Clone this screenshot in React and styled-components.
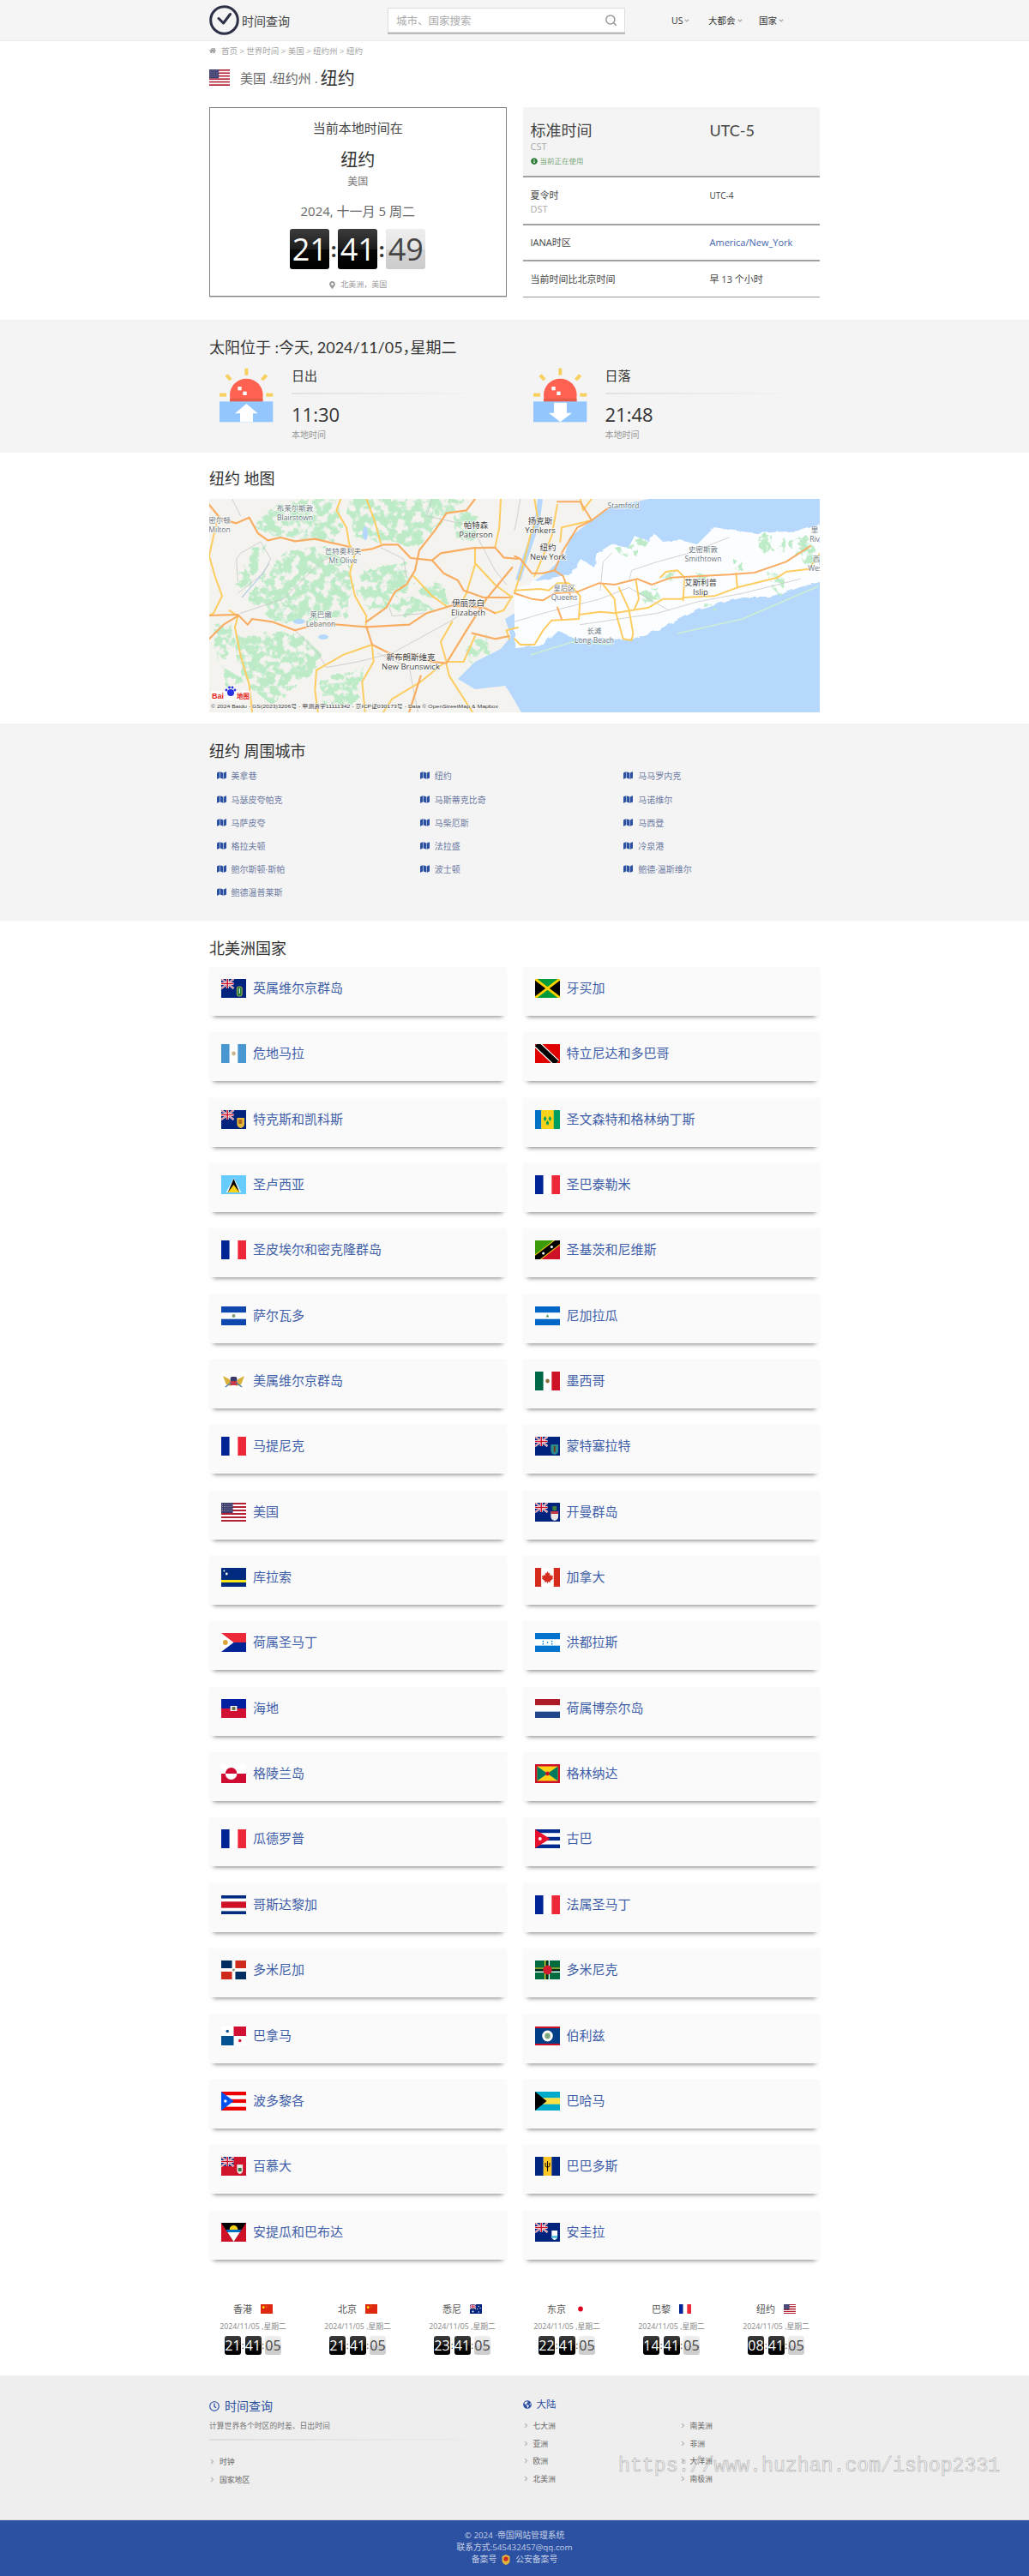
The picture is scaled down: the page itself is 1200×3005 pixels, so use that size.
import React from "react";
import styled, { createGlobalStyle } from "styled-components";
import { Search } from "lucide-react";
import {
  FaAngleDown,
  FaAngleRight,
  FaGlobeAmericas,
  FaHome,
  FaInfoCircle,
  FaMap,
  FaMapMarkerAlt,
  FaRegClock,
} from "react-icons/fa";

const BLUE = "#2c51a3";

const GlobalStyle = createGlobalStyle`
  html, body {
    margin: 0;
    padding: 0;
    background: #fff;
  }
  body {
    font-family: "Open Sans", "Noto Sans CJK SC", sans-serif;
    color: #333;
  }
  * {
    box-sizing: border-box;
  }
`;

const Page = styled.div`
  width: 1200px;
  height: 3005px;
  overflow: hidden;
`;

const Container = styled.div`
  width: 712px;
  margin: 0 auto;
`;

/* header */
const TopBar = styled.header`
  height: 48px;
  background: #f5f5f5;
  border-bottom: 1px solid #ececec;
`;

const TopBarInner = styled(Container)`
  display: flex;
  align-items: center;
  height: 47px;
`;

const Brand = styled.div`
  display: flex;
  align-items: center;
  width: 208px;
  font-size: 14px;
  color: #444;
  gap: 3px;
`;

const SearchBox = styled.div`
  display: flex;
  align-items: center;
  justify-content: space-between;
  width: 277px;
  height: 29px;
  padding: 0 8px 0 9px;
  background: #fff;
  border: 1px solid #ddd;
  box-shadow: 0 2px 0 #bbb;
  font-size: 12.5px;
  color: #aaa;
`;

const NavList = styled.nav`
  display: flex;
  margin-left: 54px;
  font-size: 10.5px;
  color: #333;
`;

const NavItem = styled.span`
  display: flex;
  align-items: center;
  gap: 1px;
  width: ${(p) => p.$w}px;
  svg {
    color: #aaa;
    font-size: 8px;
  }
`;

/* breadcrumb and title */
const Breadcrumb = styled.div`
  display: flex;
  align-items: center;
  gap: 4px;
  height: 22px;
  font-size: 9.5px;
  color: #a5a5a5;
  svg {
    font-size: 8px;
    color: #999;
    margin-right: 2px;
  }
`;

const PlaceTitle = styled.div`
  display: flex;
  align-items: center;
  height: 23px;
  margin: 9px 0 23px;
  font-size: 15px;
  color: #666;
`;

const PlaceCity = styled.span`
  font-size: 20px;
  color: #333;
  margin-left: 3px;
`;

const PlaceRegion = styled.span`
  margin-left: 12px;
`;

/* time panel */
const TwoCols = styled.div`
  display: grid;
  grid-template-columns: 1fr 1fr;
  column-gap: 19px;
`;

const TimeCard = styled.div`
  display: flex;
  flex-direction: column;
  align-items: center;
  height: 221px;
  padding-top: 12px;
  border: 1px solid #808080;
  box-shadow: 0 1px 0 #ccc;
`;

const CardLead = styled.div`
  font-size: 15px;
  line-height: 22px;
  color: #444;
`;

const CardCity = styled.div`
  font-size: 20px;
  line-height: 28px;
  margin-top: 13px;
  color: #333;
`;

const CardCountry = styled.div`
  font-size: 12px;
  line-height: 18px;
  margin-top: 2px;
  color: #777;
`;

const CardDate = styled.div`
  font-size: 15px;
  line-height: 22px;
  margin-top: 14px;
  color: #666;
`;

const CardPlace = styled.div`
  display: flex;
  align-items: center;
  gap: 5px;
  font-size: 9px;
  line-height: 14px;
  margin-top: 11px;
  color: #999;
`;

const Clock = styled.div`
  display: flex;
  align-items: center;
  margin-top: ${(p) => (p.$big ? 10 : 4)}px;
  font-family: "Open Sans", sans-serif;
`;

const Digit = styled.span`
  display: block;
  text-align: center;
  width: ${(p) => (p.$big ? 46 : 19)}px;
  height: ${(p) => (p.$big ? 47 : 22)}px;
  line-height: ${(p) => (p.$big ? 47 : 22)}px;
  font-size: ${(p) => (p.$big ? 36 : 16)}px;
  border-radius: 3px;
  color: ${(p) => (p.$light ? "#444" : "#fff")};
  background: ${(p) =>
    p.$light
      ? "linear-gradient(#eeeeee, #e4e4e4 50%, #d4d4d4 50%, #cccccc)"
      : "linear-gradient(#3c3c3c, #1c1c1c 50%, #080808 50%, #000000)"};
`;

const Colon = styled.span`
  display: block;
  text-align: center;
  width: ${(p) => (p.$big ? 10 : 4.5)}px;
  font-size: ${(p) => (p.$big ? 24 : 11)}px;
  font-weight: ${(p) => (p.$big ? 700 : 400)};
  line-height: ${(p) => (p.$big ? 47 : 22)}px;
  color: #333;
`;

const ZoneTable = styled.div`
  display: flex;
  flex-direction: column;
`;

const ZoneRow = styled.div`
  display: grid;
  grid-template-columns: 209px 1fr;
  padding-left: 9px;
  height: ${(p) => p.$h}px;
  align-items: ${(p) => (p.$center ? "center" : "start")};
  padding-top: ${(p) => p.$top || 0}px;
  background: ${(p) => (p.$shade ? "#f4f4f4" : "transparent")};
  border-bottom: ${(p) => (p.$thin ? "1px solid #999" : "2px solid #a2a2a2")};
`;

const ZoneName = styled.div`
  font-size: ${(p) => (p.$large ? 18 : 11)}px;
  line-height: ${(p) => (p.$large ? 24 : 16)}px;
  color: #444;
`;

const ZoneNote = styled.div`
  font-size: 11px;
  line-height: ${(p) => (p.$large ? 14 : 16)}px;
  color: #aaa;
`;

const ZoneStatus = styled.div`
  display: flex;
  align-items: center;
  gap: 3px;
  margin-top: 4px;
  font-size: 8.5px;
  line-height: 12px;
  color: #7aa87a;
  svg {
    color: #2f7d3a;
    font-size: 8px;
  }
`;

const ZoneValue = styled.div`
  font-family: ${(p) => (p.$large ? "Lato, sans-serif" : "inherit")};
  font-size: ${(p) => (p.$large ? 18 : p.$small ? 10 : 11)}px;
  line-height: ${(p) => (p.$large ? 24 : 16)}px;
  color: ${(p) => (p.$link ? "#4566b0" : "#444")};
`;

/* sections */
const SunSection = styled.section`
  margin-top: 26px;
  height: 155px;
  padding-top: 20px;
  background: #f4f4f4;
`;

const SectionTitle = styled.h2`
  margin: 0;
  font-family: Lato, "Noto Sans CJK SC", sans-serif;
  font-size: 18px;
  line-height: 24px;
  font-weight: 400;
  font-feature-settings: "halt";
  color: #333;
`;

const SunRow = styled.div`
  display: flex;
  padding-left: 11px;
  gap: 20px;
  margin-top: 11px;
`;

const SunIconWrap = styled.svg`
  display: block;
  width: 65px;
  height: 64px;
  margin-top: 1px;
  flex: none;
`;

const SunInfo = styled.div`
  width: 228px;
`;

const SunLabel = styled.div`
  font-size: 15px;
  line-height: 20px;
  color: #333;
`;

const SunRule = styled.div`
  height: 2px;
  margin: 10px 0 8px;
  background: linear-gradient(90deg, #e2e2e2, #f4f4f4);
`;

const SunTime = styled.div`
  font-size: 22px;
  line-height: 30px;
  color: #333;
`;

const SunCaption = styled.div`
  font-size: 10px;
  line-height: 14px;
  margin-top: 2px;
  color: #999;
`;

const MapSection = styled.section`
  height: 316px;
  padding-top: 18px;
`;

const MapFrame = styled.svg`
  display: block;
  width: 712px;
  height: 249px;
  margin-top: 12px;
`;

const CitySection = styled.section`
  height: 230px;
  padding-top: 20px;
  background: #f4f4f4;
`;

const CityGrid = styled.div`
  display: grid;
  grid-template-columns: repeat(3, 1fr);
  grid-auto-rows: 27.2px;
  margin-top: 3.4px;
`;

const CityLink = styled.a`
  display: flex;
  align-items: center;
  gap: 6px;
  padding-left: 8.5px;
  font-size: 10px;
  color: #6d7ba3;
  svg {
    color: ${BLUE};
    font-size: 11px;
  }
`;

const CountrySection = styled.section`
  padding-top: 20px;
`;

const CountryGrid = styled.div`
  display: grid;
  grid-template-columns: 1fr 1fr;
  column-gap: 19px;
  row-gap: 19.35px;
  margin-top: 10px;
`;

const CountryCard = styled.a`
  display: flex;
  align-items: flex-start;
  gap: 8px;
  height: 57px;
  padding: 14px 0 0 14px;
  background: #fafafa;
  font-size: 15px;
  line-height: 20px;
  color: #3f5ea8;
  box-shadow: 0 6px 5px -5px rgba(0, 0, 0, 0.5), 0 0 1px rgba(0, 0, 0, 0.06);
`;

const FlagSvg = styled.svg`
  display: block;
  flex: none;
  width: ${(p) => p.$w}px;
  height: ${(p) => p.$h}px;
`;

const WorldClocks = styled.div`
  display: grid;
  grid-template-columns: repeat(6, 122px);
  justify-content: center;
  margin: 50px -10px 0;
  height: 85px;
`;

const WorldClock = styled.div`
  display: flex;
  flex-direction: column;
  align-items: center;
`;

const WorldCity = styled.div`
  display: flex;
  align-items: center;
  gap: 10px;
  font-size: 11px;
  line-height: 16px;
  color: #555;
`;

const WorldDate = styled.div`
  margin-top: 5px;
  font-size: 8.8px;
  line-height: 14px;
  color: #888;
`;

/* footer */
const FooterTop = styled.footer`
  position: relative;
  height: 168px;
  padding-top: 24px;
  background: #eeeeee;
`;

const FooterBrand = styled.div`
  display: flex;
  align-items: center;
  gap: 6px;
  margin-top: 2px;
  font-size: 14px;
  line-height: 20px;
  color: ${BLUE};
  svg {
    font-size: 12px;
  }
`;

const FooterNote = styled.p`
  margin: 6px 0 0;
  font-size: 8.8px;
  line-height: 14px;
  color: #777;
`;

const FooterRule = styled.div`
  height: 2px;
  margin: 8px 5px 15px 0;
  background: linear-gradient(90deg, #dedede, #eeeeee);
`;

const FooterHead = styled.div`
  display: flex;
  align-items: center;
  gap: 6px;
  font-size: 11.5px;
  line-height: 20px;
  color: ${BLUE};
  svg {
    font-size: 10px;
  }
`;

const ContinentGrid = styled.div`
  display: grid;
  grid-template-columns: 183px 1fr;
  grid-auto-rows: 20.7px;
  margin-top: 4.6px;
`;

const FooterLink = styled.a`
  display: flex;
  align-items: center;
  gap: 5px;
  height: 20.7px;
  font-size: 8.8px;
  color: #666;
  svg {
    font-size: 9px;
    color: #bbb;
    width: 7px;
  }
`;

const Watermark = styled.div`
  position: absolute;
  left: 721px;
  top: 92px;
  font-family: "Liberation Mono", monospace;
  font-size: 23.2px;
  line-height: 28px;
  white-space: nowrap;
  color: transparent;
  -webkit-text-stroke: 0.5px #a4a4a4;
`;

const FooterBottom = styled.div`
  height: 66px;
  padding-top: 11px;
  background: ${BLUE};
  border-top: 1px solid #dcdcdc;
  font-size: 9.8px;
  line-height: 14px;
  text-align: center;
  color: rgba(255, 255, 255, 0.72);
`;

const FooterLine = styled.div`
  display: flex;
  align-items: center;
  justify-content: center;
  gap: 6px;
`;

const Badge = styled.svg`
  width: 10px;
  height: 12px;
`;

/* flags */
const Ensign = ({ bg = "#00247d", children }) => (
  <>
    <rect width="30" height="22" fill={bg} />
    <rect width="15" height="11" fill="#00247d" />
    <path d="M0 0L15 11M15 0L0 11" stroke="#fff" strokeWidth="2.2" />
    <path d="M0 0L15 11M15 0L0 11" stroke="#cf142b" strokeWidth="0.8" />
    <path d="M7.5 0V11M0 5.5H15" stroke="#fff" strokeWidth="3" />
    <path d="M7.5 0V11M0 5.5H15" stroke="#cf142b" strokeWidth="1.6" />
    {children}
  </>
);

const Bars = ({ colors, vertical }) => {
  const size = (vertical ? 30 : 22) / colors.length;
  return colors.map((c, i) =>
    vertical ? (
      <rect key={i} x={i * size} width={size + 0.2} height="22" fill={c} />
    ) : (
      <rect key={i} y={i * size} width="30" height={size + 0.2} fill={c} />
    )
  );
};

const usFlag = (
  <>
    <Bars colors={["#b22234", "#fff", "#b22234", "#fff", "#b22234", "#fff", "#b22234", "#fff", "#b22234", "#fff", "#b22234"]} />
    <rect width="14" height="12" fill="#3c3b6e" />
    <path d="M1 2H13M1 4.5H13M1 7H13M1 9.5H13" stroke="#aab" strokeWidth="0.9" strokeDasharray="1 1.2" />
  </>
);

const frFlag = <Bars vertical colors={["#002395", "#fff", "#ed2939"]} />;

const FLAGS = {
  us: usFlag,
  fr: frFlag,
  vg: (
    <Ensign>
      <rect x="19" y="9" width="6" height="11" rx="2" fill="#1f7a3a" stroke="#e5c84a" strokeWidth="0.8" />
      <rect x="21.5" y="11" width="1" height="6" fill="#fff" />
    </Ensign>
  ),
  jm: (
    <>
      <rect width="30" height="22" fill="#009b3a" />
      <path d="M0 0L15 11L0 22ZM30 0L15 11L30 22Z" fill="#000" />
      <path d="M0 0L30 22M30 0L0 22" stroke="#fed100" strokeWidth="3" />
    </>
  ),
  gt: (
    <>
      <Bars vertical colors={["#4997d0", "#fff", "#4997d0"]} />
      <circle cx="15" cy="11" r="2.4" fill="#c9b78a" />
    </>
  ),
  tt: (
    <>
      <rect width="30" height="22" fill="#e00000" />
      <path d="M2 0L26 22" stroke="#fff" strokeWidth="9" />
      <path d="M2 0L26 22" stroke="#000" strokeWidth="6.5" />
    </>
  ),
  tc: (
    <Ensign>
      <path d="M19 9H28V16Q28 20 23.5 21Q19 20 19 16Z" fill="#e5b83a" />
      <rect x="21" y="11" width="4" height="5" fill="#b5651d" />
    </Ensign>
  ),
  vc: (
    <>
      <Bars vertical colors={["#0072c6", "#fcd116", "#fcd116", "#009e60"]} />
      <path d="M12 7l2 3-2 3-2-3ZM18 7l2 3-2 3-2-3ZM15 12l2 3-2 3-2-3Z" fill="#009e60" />
    </>
  ),
  lc: (
    <>
      <rect width="30" height="22" fill="#66ccff" />
      <path d="M15 3L24 20H6Z" fill="#fff" />
      <path d="M15 4L22 20H8Z" fill="#000" />
      <path d="M15 11L22 20H8Z" fill="#fcd116" />
    </>
  ),
  kn: (
    <>
      <path d="M0 0H30L0 22Z" fill="#3a9a08" />
      <path d="M30 0V22H0Z" fill="#ce1126" />
      <path d="M0 22L30 0" stroke="#fcd116" strokeWidth="9" />
      <path d="M0 22L30 0" stroke="#000" strokeWidth="7" />
      <circle cx="10" cy="15" r="1.6" fill="#fff" />
      <circle cx="20" cy="7.5" r="1.6" fill="#fff" />
    </>
  ),
  sv: (
    <>
      <Bars colors={["#0f47af", "#fff", "#0f47af"]} />
      <circle cx="15" cy="11" r="2" fill="#7d9a6d" />
    </>
  ),
  ni: (
    <>
      <Bars colors={["#0067c6", "#fff", "#0067c6"]} />
      <path d="M15 9l2 3.5h-4Z" fill="#5a9a5a" />
    </>
  ),
  vi: (
    <>
      <rect width="30" height="22" fill="#fff" />
      <path d="M2 5L10 9L12 17L6 15ZM28 5L20 9L18 17L24 15Z" fill="#d9b13b" />
      <rect x="11" y="6" width="8" height="10" rx="2" fill="#3c3b6e" />
      <rect x="11" y="11" width="8" height="5" fill="#c8394a" />
      <path d="M5 18L12 13M25 18L18 13" stroke="#4a79a8" strokeWidth="1.5" />
    </>
  ),
  mx: (
    <>
      <Bars vertical colors={["#006847", "#fff", "#ce1126"]} />
      <circle cx="15" cy="11" r="2.4" fill="#8c6d3f" />
    </>
  ),
  ms: (
    <Ensign>
      <path d="M19 9H28V16Q28 20 23.5 21Q19 20 19 16Z" fill="#2e8b8b" />
      <rect x="22.5" y="11" width="2" height="7" fill="#6b3f1f" />
    </Ensign>
  ),
  ky: (
    <Ensign>
      <path d="M19 10H28V16Q28 20 23.5 21Q19 20 19 16Z" fill="#e8e8e8" />
      <rect x="19" y="10" width="9" height="3" fill="#c8394a" />
      <path d="M21 4h5v5h-5Z" fill="#3d7f3d" />
    </Ensign>
  ),
  cw: (
    <>
      <rect width="30" height="22" fill="#002b7f" />
      <rect y="14" width="30" height="3" fill="#f9e814" />
      <circle cx="3.5" cy="3.5" r="1" fill="#fff" />
      <circle cx="6.5" cy="7" r="1.4" fill="#fff" />
    </>
  ),
  ca: (
    <>
      <Bars vertical colors={["#d52b1e", "#fff", "#fff", "#d52b1e"]} />
      <path d="M15 4l1.4 2.6 1.6-.8-.6 3.4 2-1.4.6 1.6 2-.2-1 2.6.8.6-3.6 2.8.4 1.6-3.2-.6V18h-.8v-1.8l-3.2.6.4-1.6-3.6-2.8.8-.6-1-2.6 2 .2.6-1.6 2 1.4-.6-3.4 1.6.8Z" fill="#d52b1e" />
    </>
  ),
  sx: (
    <>
      <rect width="30" height="11" fill="#ed2939" />
      <rect y="11" width="30" height="11" fill="#002395" />
      <path d="M0 0L15 11L0 22Z" fill="#fff" />
      <circle cx="5" cy="11" r="3" fill="#e0a53a" />
    </>
  ),
  hn: (
    <>
      <Bars colors={["#0073cf", "#fff", "#0073cf"]} />
      <path d="M9 9h1.4v1.4H9ZM19.6 9H21v1.4h-1.4ZM14.3 10.3h1.4v1.4h-1.4ZM9 12h1.4v1.4H9ZM19.6 12H21v1.4h-1.4Z" fill="#0073cf" />
    </>
  ),
  ht: (
    <>
      <Bars colors={["#00209f", "#d21034"]} />
      <rect x="11" y="8" width="8" height="6" fill="#fff" />
      <rect x="13" y="9" width="4" height="4" fill="#6b6b4a" />
    </>
  ),
  bq: <Bars colors={["#ae1c28", "#fff", "#21468b"]} />,
  gl: (
    <>
      <Bars colors={["#fff", "#d00c33"]} />
      <path d="M5 11A7 7 0 0 1 19 11Z" fill="#d00c33" />
      <path d="M5 11A7 7 0 0 0 19 11Z" fill="#fff" />
    </>
  ),
  gd: (
    <>
      <rect width="30" height="22" fill="#ce1126" />
      <rect x="2.5" y="2.5" width="25" height="17" fill="#fcd116" />
      <path d="M2.5 2.5L15 11L2.5 19.5ZM27.5 2.5L15 11L27.5 19.5Z" fill="#007a5e" />
      <circle cx="15" cy="11" r="2.4" fill="#ce1126" />
    </>
  ),
  cu: (
    <>
      <Bars colors={["#002a8f", "#fff", "#002a8f", "#fff", "#002a8f"]} />
      <path d="M0 0L18 11L0 22Z" fill="#e8112d" />
      <circle cx="6" cy="11" r="2" fill="#fff" />
    </>
  ),
  cr: (
    <>
      <rect width="30" height="22" fill="#fff" />
      <rect width="30" height="3.6" fill="#002b7f" />
      <rect y="18.4" width="30" height="3.6" fill="#002b7f" />
      <rect y="7.3" width="30" height="7.4" fill="#ce1126" />
    </>
  ),
  do: (
    <>
      <rect width="30" height="22" fill="#fff" />
      <rect width="13" height="9" fill="#002d62" />
      <rect x="17" width="13" height="9" fill="#ce2b1c" />
      <rect y="13" width="13" height="9" fill="#ce2b1c" />
      <rect x="17" y="13" width="13" height="9" fill="#002d62" />
      <circle cx="15" cy="11" r="1.5" fill="#889a7a" />
    </>
  ),
  dm: (
    <>
      <rect width="30" height="22" fill="#006b3f" />
      <path d="M12 0V22M0 9H30" stroke="#fcd116" strokeWidth="1.2" />
      <path d="M14.5 0V22M0 11.2H30" stroke="#000" strokeWidth="1.2" />
      <path d="M17 0V22M0 13.4H30" stroke="#fff" strokeWidth="1.2" />
      <circle cx="15" cy="11" r="5.4" fill="#d41c30" />
    </>
  ),
  pa: (
    <>
      <rect width="30" height="22" fill="#fff" />
      <rect x="15" width="15" height="11" fill="#d21034" />
      <rect y="11" width="15" height="11" fill="#005293" />
      <circle cx="7.5" cy="5.5" r="1.8" fill="#005293" />
      <circle cx="22.5" cy="16.5" r="1.8" fill="#d21034" />
    </>
  ),
  bz: (
    <>
      <rect width="30" height="22" fill="#003f87" />
      <rect width="30" height="2" fill="#ce1126" />
      <rect y="20" width="30" height="2" fill="#ce1126" />
      <circle cx="15" cy="11" r="6.5" fill="#fff" />
      <circle cx="15" cy="11" r="3.4" fill="#7ea97e" />
    </>
  ),
  pr: (
    <>
      <Bars colors={["#ed0000", "#fff", "#ed0000", "#fff", "#ed0000"]} />
      <path d="M0 0L15 11L0 22Z" fill="#0050f0" />
      <circle cx="5" cy="11" r="1.8" fill="#fff" />
    </>
  ),
  bs: (
    <>
      <Bars colors={["#00abc9", "#fae042", "#00abc9"]} />
      <path d="M0 0L14 11L0 22Z" fill="#000" />
    </>
  ),
  bm: (
    <Ensign bg="#cf142b">
      <path d="M19 9H26V16Q26 19 22.5 20Q19 19 19 16Z" fill="#e8e8e8" />
      <rect x="20.5" y="13" width="4" height="4" fill="#2e7d3a" />
    </Ensign>
  ),
  bb: (
    <>
      <Bars vertical colors={["#00267f", "#ffc726", "#00267f"]} />
      <path d="M15 5V17M12.5 7V10.5Q12.5 12 15 12Q17.5 12 17.5 10.5V7" stroke="#000" strokeWidth="1" fill="none" />
    </>
  ),
  ag: (
    <>
      <rect width="30" height="22" fill="#ce1126" />
      <path d="M0 0H30L15 22Z" fill="#000" />
      <path d="M7.5 11H22.5L15 22Z" fill="#fff" />
      <path d="M5.5 8H24.5L22.5 11H7.5Z" fill="#0072c6" />
      <path d="M10 8A5 5 0 0 1 20 8Z" fill="#fcd116" />
    </>
  ),
  ai: (
    <Ensign>
      <path d="M20 9H27V16Q27 19 23.5 20Q20 19 20 16Z" fill="#fff" />
      <rect x="20" y="15" width="7" height="3" fill="#5cc4e0" />
    </Ensign>
  ),
  cn: (
    <>
      <rect width="30" height="22" fill="#de2910" />
      <circle cx="7" cy="7" r="3" fill="#ffde00" />
      <circle cx="13.5" cy="3.5" r="0.9" fill="#ffde00" />
      <circle cx="15.5" cy="7" r="0.9" fill="#ffde00" />
    </>
  ),
  au: (
    <Ensign>
      <circle cx="22" cy="5" r="1.3" fill="#fff" />
      <circle cx="26" cy="9" r="1.3" fill="#fff" />
      <circle cx="19" cy="11" r="1.3" fill="#fff" />
      <circle cx="22" cy="18" r="1.5" fill="#fff" />
      <circle cx="7.5" cy="17" r="2.2" fill="#fff" />
    </Ensign>
  ),
  jp: (
    <>
      <rect width="30" height="22" fill="#fff" />
      <circle cx="15" cy="11" r="6" fill="#e0001f" />
    </>
  ),
};

const Flag = ({ code, w = 29, h = 22 }) => (
  <FlagSvg $w={w} $h={h} viewBox="0 0 30 22" preserveAspectRatio="none">
    {FLAGS[code]}
  </FlagSvg>
);

/* map data, coordinates read from the reference at 3x */
const WEST_ORANGE = [
  "0,20 40,70 95,85 140,65 170,120 205,145 250,135 300,148 370,140 420,152 480,165 520,182 570,175 610,160 660,160 705,207 780,215 810,190 920,172 1000,170 1030,205 1080,210",
  "780,215 820,260 870,285 890,320 960,345 1050,345",
  "0,408 100,405 135,440 150,420 220,430 300,460 390,435 550,448 700,440 760,400 850,373 960,380 1000,400",
  "550,448 570,510 640,545 660,558 710,540 780,570 830,575 900,460 970,350 1060,240",
  "550,430 620,380 650,325 690,300 720,250 735,180 790,110 830,50 900,40 930,0",
  "920,470 1000,490 1050,480",
  "0,490 50,440 100,410",
  "740,620 700,745",
];

const WEST_YELLOW = [
  "460,0 445,40 480,100 490,160 510,190 492,260 510,340 550,410 548,440",
  "550,0 580,80 600,155",
  "30,70 15,130 0,200 20,270 45,340 15,400 0,408",
  "70,390 100,410 90,450 110,550 140,650 150,745",
  "570,510 470,545 375,600 370,670 380,745",
  "570,515 575,570 535,640 545,745",
  "715,270 780,340 830,375",
  "930,170 930,230 900,330 880,370",
  "930,225 1000,300 1060,345",
  "850,430 810,500 830,570 890,570 930,480",
  "830,580 840,620 920,745",
  "820,575 740,640 640,700 610,745",
  "1020,0 1015,100 1000,170",
  "1060,340 1030,390 1000,400",
  "1080,450 1040,460 1050,490",
];

const WEST_GRAY = [
  "100,290 95,210 110,190 180,150 215,210 190,260 100,330",
  "110,400 260,350 390,220 500,170",
  "600,170 680,210 690,270",
  "300,460 380,540 410,590 520,570 640,540 840,430 970,350",
  "630,380 640,410 760,400",
  "780,0 760,60 900,90",
  "80,0 110,60",
  "920,100 1000,250 1040,300",
  "590,540 700,590 730,745",
];

const EAST_ORANGE = [
  "0,330 60,350 100,355 140,330 220,325 295,295 350,300 430,280 480,300 550,275 750,265 840,258 950,220 1035,165",
  "0,200 20,210 60,260 100,260 140,250 170,270 200,350",
  "150,380 165,420",
  "330,30 270,75 230,10 150,10",
  "270,75 220,100 170,180 140,250",
];

const EAST_YELLOW = [
  "70,0 80,60 55,130 30,230 0,330",
  "230,0 240,40 270,0",
  "160,150 165,100 230,85 270,75",
  "150,20 130,130 70,270",
  "0,320 90,315 120,320 150,295 190,295 230,340 225,420 130,425 100,460 70,510 20,510 0,490",
  "225,405 300,395 350,400 470,380 520,350 585,350 590,345 700,340 780,310 920,275 950,255 1030,245 1070,190",
  "310,300 350,350 355,400 380,490 410,495 415,470 400,385 365,310",
  "425,285 435,350 420,385",
  "510,275 530,255 570,250 595,275 590,355",
  "775,260 780,310",
];

const EAST_GRAY = [
  "0,430 100,400 300,350 400,310 540,390",
  "400,290 410,250 500,220 610,190 750,135",
  "230,440 300,430 500,400 640,360 800,330 1000,280",
  "300,320 310,220 340,190",
  "20,0 10,60 0,110",
];

const GREEN_WEST = [
  "160,80 240,20 330,0 440,0 470,100 430,150 250,130 170,110",
  "480,0 900,0 830,50 740,170 600,150 500,130",
  "130,350 260,190 400,160 490,230 500,300 480,410 330,430 230,430",
  "530,250 700,220 700,310 620,380 560,390 520,340",
  "630,370 710,340 780,380 680,410",
  "100,470 320,470 390,540 360,610 220,720 130,650 90,550",
  "390,640 540,590 520,710 400,730",
  "50,590 120,630 60,660",
  "710,290 820,300 840,370 760,360",
  "10,440 80,430 90,530 30,570",
  "900,530 970,470 990,570 920,600",
  "860,40 940,60 930,150 860,140",
  "200,160 130,320 90,300 160,170",
];

const GREEN_EAST = [
  "850,125 900,125 900,170 860,180",
  "920,130 950,140 945,190 920,175",
  "880,250 950,270 930,340 900,310",
  "1000,180 1050,170 1060,220 1010,230",
  "350,170 420,160 430,200 370,195",
  "420,130 470,150 460,165 430,160",
  "520,255 570,255 555,285 520,285",
  "670,370 700,370 700,388 670,388",
  "770,215 800,215 795,250 775,250",
  "960,150 1040,130 1050,170 980,200",
  "640,260 680,270 670,300 640,295",
  "440,330 500,310 510,350 450,370",
];

const MAP_LABELS = [
  { x: 100, y: 23, zh: "布莱尔斯敦", en: "Blairstown" },
  { x: 12, y: 37, zh: "密尔顿", en: "Milton" },
  { x: 156, y: 73, zh: "芒特奥利夫", en: "Mt Olive" },
  { x: 311, y: 43, zh: "帕特森", en: "Paterson", strong: true },
  { x: 302, y: 134, zh: "伊丽莎白", en: "Elizabeth", strong: true },
  { x: 130, y: 147, zh: "莱巴嫩", en: "Lebanon" },
  { x: 235, y: 197, zh: "新布朗斯维克", en: "New Brunswick", strong: true },
  { x: 386, y: 38, zh: "扬克斯", en: "Yonkers", strong: true },
  { x: 395, y: 69, zh: "纽约", en: "New York", strong: true },
  { x: 414, y: 116, zh: "皇后区", en: "Queens" },
  { x: 576, y: 71, zh: "史密斯敦", en: "Smithtown" },
  { x: 573, y: 110, zh: "艾斯利普", en: "Islip", strong: true },
  { x: 449, y: 166, zh: "长滩", en: "Long Beach" },
  { x: 706, y: 48, zh: "里", en: "Riv" },
  { x: 708, y: 82, zh: "西", en: "West" },
];

const MapLabel = styled.text`
  font-family: "Open Sans", "Noto Sans CJK SC", sans-serif;
  font-size: ${(p) => (p.$strong ? 9.5 : 8.5)}px;
  fill: ${(p) => (p.$strong ? "#444" : "#6b7780")};
  text-anchor: middle;
  paint-order: stroke;
  stroke: rgba(255, 255, 255, 0.85);
  stroke-width: 1.5px;
`;

const MapNotice = styled.text`
  font-family: "Liberation Sans", "Noto Sans CJK SC", sans-serif;
  font-size: 5.6px;
  fill: #333;
  paint-order: stroke;
  stroke: rgba(255, 255, 255, 0.8);
  stroke-width: 1px;
`;

const Roads = ({ list, color, width }) =>
  list.map((points, i) => (
    <polyline
      key={i}
      points={points}
      fill="none"
      stroke={color}
      strokeWidth={width}
      strokeLinejoin="round"
      strokeLinecap="round"
    />
  ));

const RegionMap = () => (
  <MapFrame viewBox="0 0 712 249">
    <defs>
      <filter id="mottle" x="-5%" y="-5%" width="110%" height="110%" colorInterpolationFilters="sRGB">
        <feTurbulence type="fractalNoise" baseFrequency="0.035" numOctaves="4" seed="7" result="noise" />
        <feDisplacementMap in="SourceGraphic" in2="noise" scale="34" result="shape" />
        <feColorMatrix
          in="noise"
          type="matrix"
          values="0 0 0 0 0  0 0 0 0 0  0 0 0 0 0  7 0 0 0 -2.7"
          result="mask"
        />
        <feComposite in="shape" in2="mask" operator="in" />
      </filter>
      <filter id="coast" x="-2%" y="-2%" width="104%" height="104%" colorInterpolationFilters="sRGB">
        <feTurbulence type="fractalNoise" baseFrequency="0.09" numOctaves="2" seed="9" />
        <feDisplacementMap in="SourceGraphic" scale="5" />
      </filter>
    </defs>
    <rect width="712" height="249" fill="#f4f3ef" />
    <g transform="scale(0.3333)" fill="#bdebc8" filter="url(#mottle)">
      {GREEN_WEST.map((p) => (
        <polygon key={p} points={p} />
      ))}
    </g>
    <g fill="#b5d8fc">
      <ellipse cx="105" cy="143" rx="7" ry="3" />
      <ellipse cx="133" cy="161" rx="6" ry="3" />
      <ellipse cx="182" cy="40" rx="3" ry="8" />
    </g>
    <path d="M70 75L60 90L38 115" fill="none" stroke="#b5d0e6" strokeWidth="1.2" />
    <path
      d="M513,0 L712,0 L712,249 L364,249 L350,225 L345,218 L310,222 L290,210 L310,190 L340,175 L352,160 L345,140 L362,130 L358,110 L395,85 L415,65 L420,45 L446,25 L466,10 Z"
      fill="#b5d8fc"
    />
    <path d="M386,0 L382,30 L368,70 L360,95" fill="none" stroke="#b5d8fc" strokeWidth="6" />
    <polygon
      points="356,107 376,97 396,93 423,87 433,70 449,80 453,63 469,53 489,57 496,43 513,50 519,40 529,50 549,48 569,53 589,33 613,37 639,40 689,37 712,30 712,97 689,103 656,115 623,115 589,123 573,128 543,143 523,153 489,165 469,163 426,163 406,153 389,170 356,173"
      fill="#fcfdff"
      filter="url(#coast)"
    />
    <path d="M375,182 L423,167 L470,170 M546,157 L622,140 L710,102" fill="none" stroke="#cdeed3" strokeWidth="1.5" />
    <g transform="translate(356 0) scale(0.3333)" fill="#bdebc8" filter="url(#mottle)">
      {GREEN_EAST.map((p) => (
        <polygon key={p} points={p} />
      ))}
    </g>
    <g transform="translate(356 0) scale(0.3333)">
      <Roads list={EAST_GRAY} color="#c6c6c4" width={2.4} />
      <Roads list={EAST_YELLOW} color="#fdcd62" width={6} />
      <Roads list={EAST_ORANGE} color="#f9ad62" width={6} />
    </g>
    <g transform="scale(0.3333)">
      <Roads list={WEST_GRAY} color="#c6c6c4" width={2.4} />
      <Roads list={WEST_YELLOW} color="#fdcd62" width={6} />
      <Roads list={WEST_ORANGE} color="#f9ad62" width={6.5} />
    </g>
    {MAP_LABELS.map((l) => (
      <g key={l.en}>
        <MapLabel $strong={l.strong} x={l.x} y={l.y - 9}>
          {l.zh}
        </MapLabel>
        <MapLabel $strong={l.strong} x={l.x} y={l.y + 2}>
          {l.en}
        </MapLabel>
      </g>
    ))}
    <MapLabel x={483} y={11}>
      Stamford
    </MapLabel>
    <rect x="2" y="224" width="46" height="11" fill="#fff" opacity="0.8" />
    <text x="3" y="233" fontFamily="Liberation Sans" fontWeight="700" fontSize="9" fill="#e2231a">
      Bai
    </text>
    <g fill="#2932e1">
      <circle cx="25" cy="226" r="4" />
      <circle cx="20" cy="223" r="1.4" />
      <circle cx="23.5" cy="220" r="1.4" />
      <circle cx="27" cy="220" r="1.4" />
      <circle cx="30" cy="223" r="1.4" />
    </g>
    <text x="32" y="233" fontFamily="Noto Sans CJK SC" fontWeight="700" fontSize="7.5" fill="#e2231a">
      地图
    </text>
    <MapNotice x="2" y="244" textLength="335" lengthAdjust="spacingAndGlyphs">
      © 2024 Baidu - GS(2023)3206号 - 甲测资字11111342 - 京ICP证030173号 - Data © OpenStreetMap &amp; Mapbox
    </MapNotice>
  </MapFrame>
);

const SunIcon = ({ down }) => (
  <SunIconWrap viewBox="30 12 195 192">
    <g fill="#f7d060">
      <rect x="121" y="14" width="12" height="24" />
      <path d="M52 41l10-7 15 17-10 7zM202 41l-10-7-15 17 10 7z" />
      <rect x="33" y="101" width="24" height="12" />
      <rect x="196" y="101" width="24" height="12" />
    </g>
    <circle cx="127" cy="108" r="58" fill="#ff6250" />
    <rect x="69" y="120" width="116" height="14" fill="#e95b48" />
    <rect x="97" y="78" width="13" height="13" fill="#fff" />
    <rect x="115" y="95" width="13" height="13" fill="#fff" />
    <rect x="33" y="130" width="187" height="72" fill="#93c6fd" />
    {down ? (
      <path d="M105 134H150V170H168L127 202L87 170H105Z" fill="#fff" />
    ) : (
      <path d="M127 138L167 172H150V202H105V172H87Z" fill="#fff" />
    )}
  </SunIconWrap>
);

const BigClock = () => (
  <Clock $big>
    <Digit $big>21</Digit>
    <Colon $big>:</Colon>
    <Digit $big>41</Digit>
    <Colon $big>:</Colon>
    <Digit $big $light>
      49
    </Digit>
  </Clock>
);

const Logo = () => (
  <svg width="35" height="35" viewBox="0 0 35 35">
    <circle cx="17.5" cy="17.5" r="15.8" fill="none" stroke="#2d3047" strokeWidth="3" />
    <path d="M11 15.5L16.5 21L24.5 10.5" fill="none" stroke="#2d3047" strokeWidth="3" strokeLinecap="round" strokeLinejoin="round" />
  </svg>
);

const CITIES = [
  "美拿巷", "纽约", "马马罗内克",
  "马瑟皮夸帕克", "马斯蒂克比奇", "马诺维尔",
  "马萨皮夸", "马柴厄斯", "马西登",
  "格拉夫顿", "法拉盛", "冷泉港",
  "鲍尔斯顿·斯帕", "波士顿", "鲍德·温斯维尔",
  "鲍德温普莱斯",
];

const COUNTRIES = [
  ["英属维尔京群岛", "vg"], ["牙买加", "jm"],
  ["危地马拉", "gt"], ["特立尼达和多巴哥", "tt"],
  ["特克斯和凯科斯", "tc"], ["圣文森特和格林纳丁斯", "vc"],
  ["圣卢西亚", "lc"], ["圣巴泰勒米", "fr"],
  ["圣皮埃尔和密克隆群岛", "fr"], ["圣基茨和尼维斯", "kn"],
  ["萨尔瓦多", "sv"], ["尼加拉瓜", "ni"],
  ["美属维尔京群岛", "vi"], ["墨西哥", "mx"],
  ["马提尼克", "fr"], ["蒙特塞拉特", "ms"],
  ["美国", "us"], ["开曼群岛", "ky"],
  ["库拉索", "cw"], ["加拿大", "ca"],
  ["荷属圣马丁", "sx"], ["洪都拉斯", "hn"],
  ["海地", "ht"], ["荷属博奈尔岛", "bq"],
  ["格陵兰岛", "gl"], ["格林纳达", "gd"],
  ["瓜德罗普", "fr"], ["古巴", "cu"],
  ["哥斯达黎加", "cr"], ["法属圣马丁", "fr"],
  ["多米尼加", "do"], ["多米尼克", "dm"],
  ["巴拿马", "pa"], ["伯利兹", "bz"],
  ["波多黎各", "pr"], ["巴哈马", "bs"],
  ["百慕大", "bm"], ["巴巴多斯", "bb"],
  ["安提瓜和巴布达", "ag"], ["安圭拉", "ai"],
];

const WORLD = [
  ["香港", "cn", "21"],
  ["北京", "cn", "21"],
  ["悉尼", "au", "23"],
  ["东京", "jp", "22"],
  ["巴黎", "fr", "14"],
  ["纽约", "us", "08"],
];

const CONTINENTS = ["七大洲", "南美洲", "亚洲", "非洲", "欧洲", "大洋洲", "北美洲", "南极洲"];

const App = () => {
  return (
    <Page>
      <GlobalStyle />
      <TopBar>
        <TopBarInner>
          <Brand>
            <Logo />
            时间查询
          </Brand>
          <SearchBox>
            城市、国家搜索
            <Search size={15} color="#999" strokeWidth={2.4} />
          </SearchBox>
          <NavList>
            <NavItem $w={43}>US <FaAngleDown /></NavItem>
            <NavItem $w={59}>大都会 <FaAngleDown /></NavItem>
            <NavItem $w={50}>国家 <FaAngleDown /></NavItem>
          </NavList>
        </TopBarInner>
      </TopBar>

      <Container>
        <Breadcrumb>
          <FaHome /> 首页 &gt; 世界时间 &gt; 美国 &gt; 纽约州 &gt; 纽约
        </Breadcrumb>
        <PlaceTitle>
          <Flag code="us" w={24} h={19} />
          <PlaceRegion>美国 .纽约州 .</PlaceRegion>
          <PlaceCity>纽约</PlaceCity>
        </PlaceTitle>

        <TwoCols>
          <TimeCard>
            <CardLead>当前本地时间在</CardLead>
            <CardCity>纽约</CardCity>
            <CardCountry>美国</CardCountry>
            <CardDate>2024, 十一月 5 周二</CardDate>
            <BigClock />
            <CardPlace>
              <FaMapMarkerAlt /> 北美洲，美国
            </CardPlace>
          </TimeCard>
          <ZoneTable>
            <ZoneRow $h={82} $top={15} $shade>
              <div>
                <ZoneName $large>标准时间</ZoneName>
                <ZoneNote $large>CST</ZoneNote>
                <ZoneStatus>
                  <FaInfoCircle /> 当前正在使用
                </ZoneStatus>
              </div>
              <ZoneValue $large>UTC-5</ZoneValue>
            </ZoneRow>
            <ZoneRow $h={56} $top={13}>
              <div>
                <ZoneName>夏令时</ZoneName>
                <ZoneNote>DST</ZoneNote>
              </div>
              <ZoneValue $small>UTC-4</ZoneValue>
            </ZoneRow>
            <ZoneRow $h={42} $center>
              <ZoneName>IANA时区</ZoneName>
              <ZoneValue $link>America/New_York</ZoneValue>
            </ZoneRow>
            <ZoneRow $h={42} $center $thin>
              <ZoneName>当前时间比北京时间</ZoneName>
              <ZoneValue>早 13 个小时</ZoneValue>
            </ZoneRow>
          </ZoneTable>
        </TwoCols>
      </Container>

      <SunSection>
        <Container>
          <SectionTitle>太阳位于 :今天, 2024/11/05，星期二</SectionTitle>
          <TwoCols>
            <SunRow>
              <SunIcon />
              <SunInfo>
                <SunLabel>日出</SunLabel>
                <SunRule />
                <SunTime>11:30</SunTime>
                <SunCaption>本地时间</SunCaption>
              </SunInfo>
            </SunRow>
            <SunRow>
              <SunIcon down />
              <SunInfo>
                <SunLabel>日落</SunLabel>
                <SunRule />
                <SunTime>21:48</SunTime>
                <SunCaption>本地时间</SunCaption>
              </SunInfo>
            </SunRow>
          </TwoCols>
        </Container>
      </SunSection>

      <MapSection>
        <Container>
          <SectionTitle>纽约 地图</SectionTitle>
          <RegionMap />
        </Container>
      </MapSection>

      <CitySection>
        <Container>
          <SectionTitle>纽约 周围城市</SectionTitle>
          <CityGrid>
            {CITIES.map((c) => (
              <CityLink key={c}>
                <FaMap /> {c}
              </CityLink>
            ))}
          </CityGrid>
        </Container>
      </CitySection>

      <CountrySection>
        <Container>
          <SectionTitle>北美洲国家</SectionTitle>
          <CountryGrid>
            {COUNTRIES.map(([name, code]) => (
              <CountryCard key={name}>
                <Flag code={code} />
                {name}
              </CountryCard>
            ))}
          </CountryGrid>
          <WorldClocks>
            {WORLD.map(([city, code, hour]) => (
              <WorldClock key={city}>
                <WorldCity>
                  {city}
                  <Flag code={code} w={14} h={11} />
                </WorldCity>
                <WorldDate>2024/11/05 ,星期二</WorldDate>
                <Clock>
                  <Digit>{hour}</Digit>
                  <Colon>:</Colon>
                  <Digit>41</Digit>
                  <Colon>:</Colon>
                  <Digit $light>05</Digit>
                </Clock>
              </WorldClock>
            ))}
          </WorldClocks>
        </Container>
      </CountrySection>

      <FooterTop>
        <Container>
          <TwoCols>
            <div>
              <FooterBrand>
                <FaRegClock /> 时间查询
              </FooterBrand>
              <FooterNote>计算世界各个时区的时差、日出时间</FooterNote>
              <FooterRule />
              <FooterLink><FaAngleRight /> 时钟</FooterLink>
              <FooterLink><FaAngleRight /> 国家地区</FooterLink>
            </div>
            <div>
              <FooterHead>
                <FaGlobeAmericas /> 大陆
              </FooterHead>
              <ContinentGrid>
                {CONTINENTS.map((c) => (
                  <FooterLink key={c}>
                    <FaAngleRight /> {c}
                  </FooterLink>
                ))}
              </ContinentGrid>
            </div>
          </TwoCols>
        </Container>
        <Watermark>https://www.huzhan.com/ishop2331</Watermark>
      </FooterTop>

      <FooterBottom>
        <FooterLine>© 2024 ·帝国网站管理系统</FooterLine>
        <FooterLine>联系方式:545432457@qq.com</FooterLine>
        <FooterLine>
          备案号
          <Badge viewBox="0 0 10 12">
            <path d="M5 0L9.5 2V7Q9.5 10.5 5 12Q.5 10.5 .5 7V2Z" fill="#e3b23c" />
            <circle cx="5" cy="5" r="2.6" fill="#c8281e" />
          </Badge>
          公安备案号
        </FooterLine>
      </FooterBottom>
    </Page>
  );
};

export default App;
